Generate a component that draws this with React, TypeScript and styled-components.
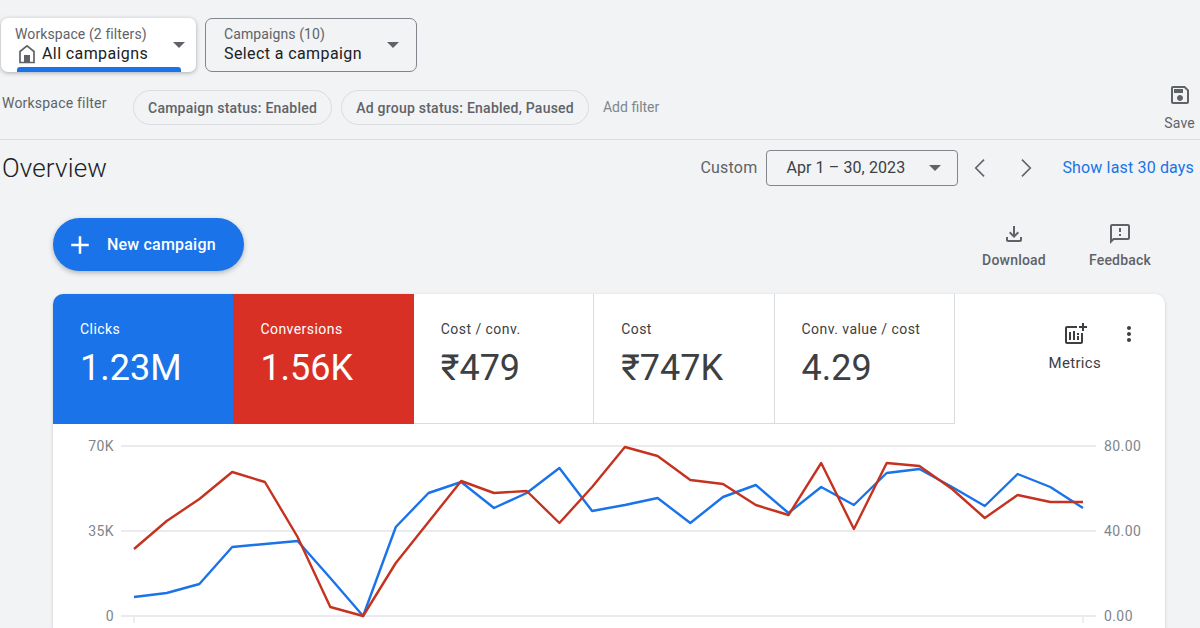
import React from 'react'
import styled, { createGlobalStyle } from 'styled-components'

const GlobalStyle = createGlobalStyle`
  html, body {
    margin: 0;
    height: 628px;
    overflow: hidden;
    background: #f1f3f5;
    font-family: Roboto, "Liberation Sans", sans-serif;
  }
  * { box-sizing: border-box; }
`

const Page = styled.div`
  width: 1200px;
  height: 628px;
  overflow: hidden;
  display: flex;
  flex-direction: column;
  & > * { flex-shrink: 0; }
`
const TopRow = styled.div`
  display: flex;
  gap: 9px;
  padding: 18px 0 0 1px;
`
const Picker = styled.div<{ $active?: boolean }>`
  position: relative;
  width: ${p => (p.$active ? 195 : 212)}px;
  height: 54px;
  display: flex;
  align-items: center;
  justify-content: space-between;
  padding: ${p => (p.$active ? '0 11px 0 14px' : '0 17px 0 18px')};
  border-radius: 7px;
  background: ${p => (p.$active ? '#fff' : 'transparent')};
  border: ${p => (p.$active ? 'none' : '1px solid #80868b')};
  box-shadow: ${p => (p.$active ? '0 1px 4px rgba(60,64,67,.4)' : 'none')};
`
const PickerBar = styled.div`
  position: absolute;
  left: 16px;
  right: 15px;
  bottom: 0;
  height: 5px;
  border-radius: 3px 3px 0 0;
  background: #1a73e8;
`
const PickerLabel = styled.div`
  font-size: 14px;
  line-height: 18px;
  letter-spacing: .1px;
  color: #5f6368;
`
const PickerValue = styled.div`
  display: flex;
  align-items: center;
  gap: 6px;
  font-size: 16px;
  line-height: 22px;
  letter-spacing: .4px;
  color: #202124;
`
const HomeSlot = styled.span`
  display: flex;
  margin-left: 3px;
`
const Caret = styled.span`
  width: 0;
  height: 0;
  border-left: 6px solid transparent;
  border-right: 6px solid transparent;
  border-top: 6px solid #5f6368;
`
const FilterRow = styled.div`
  display: flex;
  align-items: flex-start;
  height: 62px;
  margin-top: 6px;
  padding-left: 2px;
  border-bottom: 1px solid #dadce0;
`
const FilterLabel = styled.div`
  width: 131px;
  padding-top: 16px;
  font-size: 14px;
  line-height: 18px;
  letter-spacing: .2px;
  color: #5f6368;
`
const Chip = styled.div`
  height: 35px;
  margin: 12px 9px 0 0;
  padding: 0 14px;
  display: flex;
  align-items: center;
  border: 1px solid #dadce0;
  border-radius: 18px;
  font-size: 14px;
  font-weight: 500;
  letter-spacing: .24px;
  color: #5f6368;
`
const AddFilter = styled.div`
  margin: 12px 0 0 5px;
  line-height: 35px;
  font-size: 14px;
  color: #80868b;
`
const SaveAction = styled.div`
  margin-left: auto;
  padding: 5px 5px 0 0;
  display: flex;
  flex-direction: column;
  align-items: center;
  gap: 8px;
  font-size: 14px;
  letter-spacing: .2px;
  color: #5f6368;
`
const OverviewRow = styled.div`
  display: flex;
  align-items: center;
  height: 55px;
  padding: 0 6px 0 2px;
`
const Title = styled.h1`
  margin: 0;
  font-size: 26px;
  font-weight: 300;
  letter-spacing: .15px;
  color: #202124;
`
const CustomLabel = styled.div`
  margin-left: auto;
  font-size: 16px;
  letter-spacing: .2px;
  color: #5f6368;
`
const DateBox = styled.div`
  width: 192px;
  height: 36px;
  margin-left: 9px;
  padding: 0 16px 0 19px;
  display: flex;
  align-items: center;
  justify-content: space-between;
  border: 1px solid #80868b;
  border-radius: 4px;
  font-size: 16px;
  letter-spacing: .1px;
  color: #3c4043;
`
const Arrows = styled.div`
  display: flex;
  align-items: center;
  gap: 20px;
  margin: 0 25px 0 11px;
`
const ShowLast = styled.div`
  font-size: 16px;
  letter-spacing: .16px;
  color: #1a73e8;
`
const ActionRow = styled.div`
  display: flex;
  align-items: flex-start;
  height: 99px;
  padding: 23px 40px 0 53px;
  gap: 26px;
`
const NewCampaign = styled.div`
  width: 191px;
  height: 53px;
  margin-right: auto;
  padding-left: 12px;
  display: flex;
  align-items: center;
  gap: 12px;
  border-radius: 27px;
  background: #1a73e8;
  box-shadow: 0 2px 5px rgba(60,64,67,.35);
  font-size: 16px;
  font-weight: 500;
  letter-spacing: .2px;
  color: #fff;
`
const RowAction = styled.div`
  width: 80px;
  margin-top: 4px;
  display: flex;
  flex-direction: column;
  align-items: center;
  gap: 6px;
  font-size: 14px;
  font-weight: 500;
  letter-spacing: .2px;
  color: #5f6368;
`
const Card = styled.div`
  margin: 0 0 0 53px;
  width: 1112px;
  background: #fff;
  border-radius: 10px 10px 0 0;
  box-shadow: 0 1px 3px rgba(60,64,67,.25);
`
const TabRow = styled.div`
  display: flex;
  height: 130px;
`
const Tab = styled.div<{ $bg?: string }>`
  width: 180.4px;
  padding: 25px 0 0 27px;
  background: ${p => p.$bg || '#fff'};
  color: ${p => (p.$bg ? '#fff' : '#3c4043')};
  border-right: ${p => (p.$bg ? 'none' : '1px solid #dadce0')};
  border-bottom: ${p => (p.$bg ? 'none' : '1px solid #dadce0')};
  &:first-child { border-top-left-radius: 10px; }
`
const TabLabel = styled.div`
  font-size: 14px;
  line-height: 20px;
  letter-spacing: .45px;
`
const TabValue = styled.div`
  margin-top: 6px;
  font-size: 36px;
  line-height: 46px;
`
const MetricsArea = styled.div`
  flex: 1;
  display: flex;
  justify-content: flex-end;
  gap: 16px;
  padding: 28px 24px 0 0;
`
const MetricsButton = styled.div`
  display: flex;
  flex-direction: column;
  align-items: center;
  gap: 8px;
  font-size: 15px;
  letter-spacing: .3px;
  color: #3c4043;
`
const ChartSvg = styled.svg`
  display: block;
  margin-left: -53px;
`
const AxisText = styled.text`
  font-family: Roboto, "Liberation Sans", sans-serif;
  font-size: 14px;
  letter-spacing: .4px;
  fill: #80868b;
`

const Icon = ({ d, size = 24, color = '#5f6368' }: { d: string, size?: number, color?: string }) => (
  <svg width={size} height={size} viewBox="0 0 24 24" fill={color}><path d={d} /></svg>
)

const SAVE_ICON = 'M17 3H5c-1.11 0-2 .9-2 2v14c0 1.1.89 2 2 2h14c1.1 0 2-.9 2-2V7l-4-4zm2 16H5V5h11.17L19 7.83V19zm-7-7c-1.66 0-3 1.34-3 3s1.34 3 3 3 3-1.34 3-3-1.34-3-3-3zM6 6h9v4H6z'
const DOWNLOAD_ICON = 'M18 15v3H6v-3H4v3c0 1.1.9 2 2 2h12c1.1 0 2-.9 2-2v-3h-2zm-1-4l-1.41-1.41L13 12.17V4h-2v8.17L8.41 9.59 7 11l5 5 5-5z'
const FEEDBACK_ICON = 'M20 2H4c-1.1 0-1.99.9-1.99 2L2 22l4-4h14c1.1 0 2-.9 2-2V4c0-1.1-.9-2-2-2zm0 14H5.17l-.59.59-.58.58V4h16v12zm-9-4h2v2h-2zm0-6h2v4h-2z'
const LEFT_ICON = 'M15.6 4.2 14.5 3.1 5.6 12l8.9 8.9 1.1-1.1L7.8 12z'
const RIGHT_ICON = 'M8.4 4.2 9.5 3.1l8.9 8.9-8.9 8.9-1.1-1.1 7.8-7.8z'
const PLUS_ICON = 'M19 13h-6v6h-2v-6H5v-2h6V5h2v6h6v2z'
const MORE_ICON = 'M12 8c1.1 0 2-.9 2-2s-.9-2-2-2-2 .9-2 2 .9 2 2 2zm0 2c-1.1 0-2 .9-2 2s.9 2 2 2 2-.9 2-2-.9-2-2-2zm0 6c-1.1 0-2 .9-2 2s.9 2 2 2 2-.9 2-2-.9-2-2-2z'
const METRICS_ICON = 'M19 1v3h-3v2h3v3h2V6h3V4h-3V1h-2zM2 4h12v2H4v14h14V11h2v9c0 1.1-.9 2-2 2H4c-1.1 0-2-.9-2-2V6c0-1.1.9-2 2-2zm4 6h2v8H6v-8zm4-1h2v9h-2V9zm4 5h2v4h-2v-4zm0-3h2v2h-2v-2z'

const HomeIcon = () => (
  <svg width="18" height="20" viewBox="0 0 18 20" fill="none" stroke="#5f6368" strokeWidth="1.7">
    <path d="M2 18.5V7.5L9 1.8l7 5.7v11z" />
    <rect x="6" y="11" width="6" height="7.5" fill="#5f6368" stroke="none" />
  </svg>
)

// y values are picture coordinates of each day, left to right
const X_START = 134
const X_STEP = 949 / 29
const BLUE = [597, 593, 584, 547, 544, 541, 578, 616, 527, 493, 482, 508, 493, 468, 511, 505, 498, 523, 497, 485, 513, 487, 505, 473, 469, 487, 506, 474, 487, 508]
const RED = [549, 521, 499, 472, 482, 537, 607, 616, 563, 522, 481, 493, 491, 523, 487, 447, 456, 480, 484, 505, 515, 463, 529, 463, 466, 489, 518, 495, 502, 502]
const GRID = [
  { y: 446, left: '70K', right: '80.00' },
  { y: 531, left: '35K', right: '40.00' },
  { y: 616, left: '0', right: '0.00' },
]
const CHART_TOP = 424

const points = (values: number[]) =>
  values.map((y, i) => `${(X_START + X_STEP * i).toFixed(1)},${y - CHART_TOP}`).join(' ')

function Chart() {
  return (
    <ChartSvg width="1165" height="204" viewBox="0 0 1165 204">
      {GRID.map(g => (
        <g key={g.y}>
          <line x1="121" x2="1096" y1={g.y - CHART_TOP} y2={g.y - CHART_TOP} stroke="#e3e5e8" strokeWidth="1.5" />
          <AxisText x="114" y={g.y - CHART_TOP + 5} textAnchor="end">{g.left}</AxisText>
          <AxisText x="1104" y={g.y - CHART_TOP + 5}>{g.right}</AxisText>
        </g>
      ))}
      <line x1="134" x2="134" y1="193" y2="199" stroke="#dadce0" />
      <line x1="1083" x2="1083" y1="193" y2="199" stroke="#dadce0" />
      <polyline points={points(BLUE)} fill="none" stroke="#1a73e8" strokeWidth="2.4" strokeLinejoin="round" />
      <polyline points={points(RED)} fill="none" stroke="#c5321f" strokeWidth="2.4" strokeLinejoin="round" />
    </ChartSvg>
  )
}

const TABS = [
  { label: 'Clicks', value: '1.23M', bg: '#1a73e8' },
  { label: 'Conversions', value: '1.56K', bg: '#d93025' },
  { label: 'Cost / conv.', value: '₹479' },
  { label: 'Cost', value: '₹747K' },
  { label: 'Conv. value / cost', value: '4.29' },
]

export default function App() {
  return (
    <Page>
      <GlobalStyle />
      <TopRow>
        <Picker $active>
          <div>
            <PickerLabel>Workspace (2 filters)</PickerLabel>
            <PickerValue><HomeSlot><HomeIcon /></HomeSlot>All campaigns</PickerValue>
          </div>
          <Caret />
          <PickerBar />
        </Picker>
        <Picker>
          <div>
            <PickerLabel>Campaigns (10)</PickerLabel>
            <PickerValue>Select a campaign</PickerValue>
          </div>
          <Caret />
        </Picker>
      </TopRow>
      <FilterRow>
        <FilterLabel>Workspace filter</FilterLabel>
        <Chip>Campaign status: Enabled</Chip>
        <Chip>Ad group status: Enabled, Paused</Chip>
        <AddFilter>Add filter</AddFilter>
        <SaveAction><Icon d={SAVE_ICON} />Save</SaveAction>
      </FilterRow>
      <OverviewRow>
        <Title>Overview</Title>
        <CustomLabel>Custom</CustomLabel>
        <DateBox>Apr 1 – 30, 2023<Caret /></DateBox>
        <Arrows>
          <Icon d={LEFT_ICON} />
          <Icon d={RIGHT_ICON} />
        </Arrows>
        <ShowLast>Show last 30 days</ShowLast>
      </OverviewRow>
      <ActionRow>
        <NewCampaign><Icon d={PLUS_ICON} size={30} color="#fff" />New campaign</NewCampaign>
        <RowAction><Icon d={DOWNLOAD_ICON} />Download</RowAction>
        <RowAction><Icon d={FEEDBACK_ICON} />Feedback</RowAction>
      </ActionRow>
      <Card>
        <TabRow>
          {TABS.map(t => (
            <Tab key={t.label} $bg={t.bg}>
              <TabLabel>{t.label}</TabLabel>
              <TabValue>{t.value}</TabValue>
            </Tab>
          ))}
          <MetricsArea>
            <MetricsButton><Icon d={METRICS_ICON} color="#3c4043" />Metrics</MetricsButton>
            <Icon d={MORE_ICON} color="#3c4043" />
          </MetricsArea>
        </TabRow>
        <Chart />
      </Card>
    </Page>
  )
}
